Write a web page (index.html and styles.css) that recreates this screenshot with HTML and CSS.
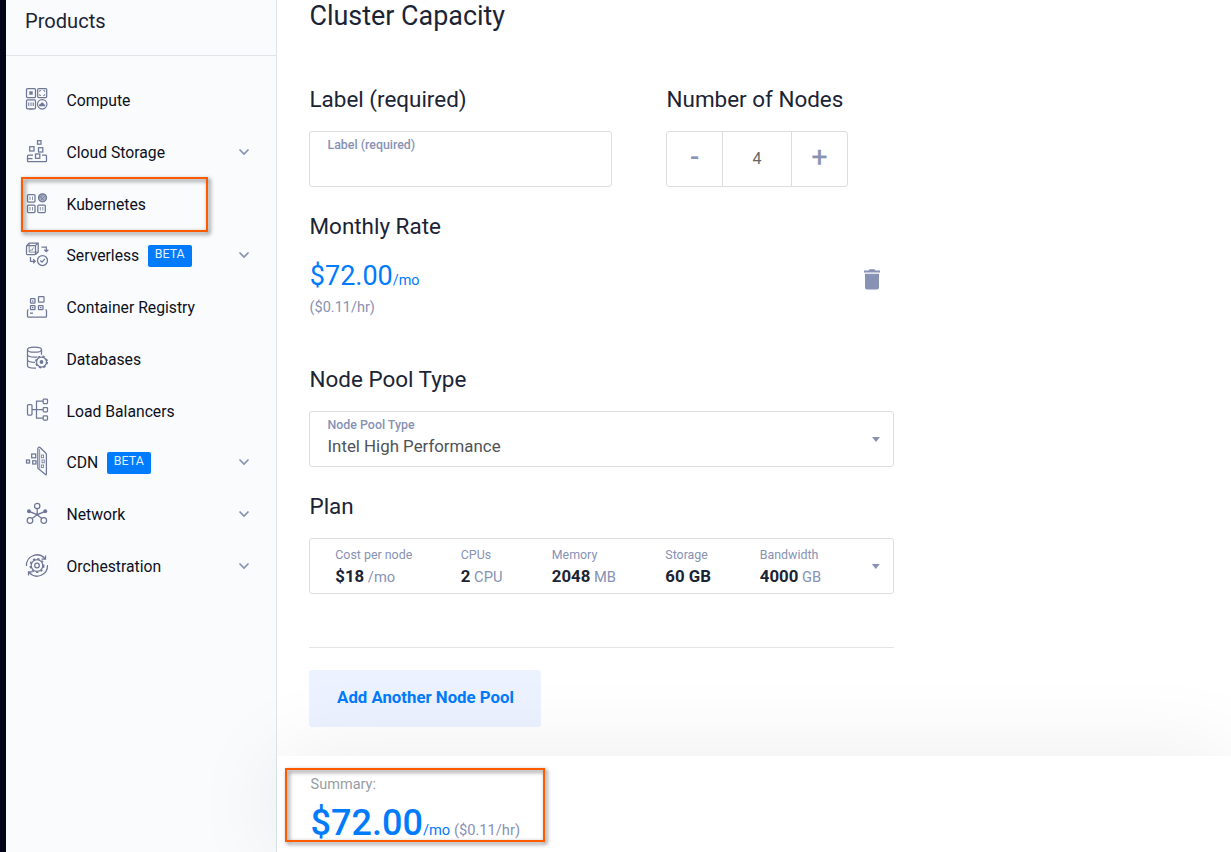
FILE: index.html
```html
<!DOCTYPE html>
<html lang="en">
<head>
<meta charset="utf-8">
<title>Cluster Capacity</title>
<link rel="stylesheet" href="styles.css">
</head>
<body>
<div class="app">
  <div class="rail"></div>
  <aside class="sidebar">
    <div class="sidebar-head">Products</div>
    <nav class="nav">
      <a class="nav-item">
        <svg class="icon" viewBox="0 0 24 30"><rect x="1.500" y="2.500" width="9" height="9" rx="1"/><rect class="solid" x="4.300" y="5.300" width="3.400" height="3.400"/><rect x="12.700" y="2.500" width="9" height="9" rx="1"/><path class="thin" d="M14.700 6V4.500h1.500M18.200 4.500h1.500V6M19.700 8v1.500h-1.500M16.200 9.500h-1.500V8"/><rect x="1.500" y="13.800" width="9" height="9" rx="1"/><path class="thin" d="M3.500 16.500V20M5.200 16.500V20M6.900 16.500V20M8.500 16.500V20M4 23.200h4"/><circle cx="17.200" cy="18.300" r="4.700"/><path class="solid" d="M13.900 20.200q-.2-2 1.500-2.100.5-1.800 2-1.500 1.500.2 1.500 1.700 1.700.1 1.500 1.900z"/></svg>
        <span>Compute</span>
      </a>
      <a class="nav-item">
        <svg class="icon" viewBox="0 0 24 30"><rect x="12.500" y="2.700" width="3.500" height="3.500"/><rect x="4.700" y="8.700" width="4.300" height="4.300"/><rect x="13.500" y="9.700" width="4.300" height="4.300"/><rect x="10.500" y="16" width="4.300" height="4.300"/><path d="M8 17.200H3.500q-1 0-1 1v4.500q0 1 1 1h17q1 0 1-1v-4.500q0-1-1-1H17M2.500 20.700h5"/></svg>
        <span>Cloud Storage</span>
        <svg class="chev" viewBox="0 0 12 8"><path d="M1.500 1.500 6 6l4.500-4.500"/></svg>
      </a>
      <a class="nav-item">
        <svg class="icon" viewBox="0 0 24 30"><rect x="2.500" y="4.500" width="7.500" height="7.500" rx="1"/><path class="thin" d="M5 6.500V10M7.500 6.500V10"/><circle class="shade" cx="17.500" cy="7.800" r="4"/><path class="thin" d="M14 8.500l4-4M15.500 10.500l5-5M14.500 6l4.500 4.500"/><rect x="2.500" y="15" width="7.500" height="7.500" rx="1"/><path class="thin" d="M5 17v3.500M7.500 17v3.500"/><rect x="12.800" y="15" width="7.500" height="7.500" rx="1"/><path class="thin" d="M15.300 17v3.500M17.800 17v3.500"/></svg>
        <span>Kubernetes</span>
      </a>
      <a class="nav-item">
        <svg class="icon" viewBox="0 0 24 30"><rect x="1.500" y="4.500" width="9" height="9" rx=".8"/><path d="M1.700 4.700 4.200 2.100h9V11l-2.700 2.500M10.500 4.500l2.600-2.400"/><path class="thin" d="M4.200 2.100v9h9M4 11l2-2.500 1 1 1.500-3"/><path d="M16.500 6h4.800v4.500M19.300 8.700l2 2 2-2M5.500 16v4.300H10M8.200 18.300l2 2-2 2"/><circle cx="17.500" cy="19.500" r="5"/><path d="M15.300 19.500l1.700 1.600 2.800-3.200"/></svg>
        <span>Serverless</span><b class="badge">BETA</b>
        <svg class="chev" viewBox="0 0 12 8"><path d="M1.500 1.500 6 6l4.500-4.500"/></svg>
      </a>
      <a class="nav-item">
        <svg class="icon" viewBox="0 0 24 30"><rect x="13.500" y="3.500" width="5.500" height="5.500" rx=".6"/><rect x="5.500" y="5.700" width="4.500" height="4.500" rx=".6"/><rect x="5.500" y="12.700" width="4.500" height="4" rx=".6"/><rect x="13.500" y="12.700" width="4.500" height="4" rx=".6"/><path d="M7 8h1.500M7 14.700h1.500M15 14.700h1.500M3.500 16.700q-1 0-1 1v5.500q0 1 1 1h17q1 0 1-1v-5.500q0-1-1-1M5 20.200h3"/></svg>
        <span>Container Registry</span>
      </a>
      <a class="nav-item">
        <svg class="icon" viewBox="0 0 24 30"><ellipse cx="9.500" cy="4.700" rx="7" ry="2.500"/><path d="M2.500 4.700v16q0 2.300 7 2.500h1.500M16.500 4.700v5M2.500 10q1 2 7 2.200h3M2.500 15.200q1 2 7.500 2.200"/><circle cx="16.500" cy="17" r="5"/><circle class="gear-teeth" cx="16.500" cy="17" r="5.800"/><circle class="solid" cx="16.500" cy="17" r="1.900"/></svg>
        <span>Databases</span>
      </a>
      <a class="nav-item">
        <svg class="icon" viewBox="0 0 24 30"><rect x="2.500" y="7.500" width="4.500" height="10.500" rx="1"/><path d="M7 12.700h11M18 4.200h-6.500v17H18"/><rect x="18.200" y="2.200" width="4.300" height="4.300" rx=".8"/><rect x="18.200" y="10.500" width="4.300" height="4.300" rx=".8"/><rect x="18.200" y="18.800" width="4.300" height="4.300" rx=".8"/></svg>
        <span>Load Balancers</span>
      </a>
      <a class="nav-item">
        <svg class="icon" viewBox="0 0 24 30"><rect x="1.500" y="12" width="3" height="3"/><rect x="6.700" y="6" width="4" height="3.800"/><rect x="7.700" y="12.800" width="3.300" height="3.200"/><path d="M13.300-.3q.9-1 2 0l5.400 5.300q.7.600.7 1.500v19.500q0 1.400-1 .6L13.500 20.800q-.7-.5-.7-1.500V1q0-.8.500-1.300z"/><g class="thin"><path d="M14.600 1v19.500"/><rect x="16.300" y="7" width="2.300" height="2.800"/><rect x="17" y="12" width="2.300" height="2.800"/><rect x="16.300" y="17" width="2.300" height="2.500"/></g></svg>
        <span>CDN</span><b class="badge">BETA</b>
        <svg class="chev" viewBox="0 0 12 8"><path d="M1.500 1.500 6 6l4.500-4.500"/></svg>
      </a>
      <a class="nav-item">
        <svg class="icon" viewBox="0 0 24 30"><circle cx="12.200" cy="6" r="2.700"/><circle class="solid" cx="4" cy="11.300" r="2"/><circle class="solid" cx="20.200" cy="11.300" r="2"/><circle cx="5" cy="20.500" r="2.800"/><circle cx="18.800" cy="20.500" r="2.800"/><path d="M12.200 9v5M4 11.300l8.200 3.400 8-3.400M12.200 14.700 7 18.500M12.200 14.700l4.600 3.800"/></svg>
        <span>Network</span>
        <svg class="chev" viewBox="0 0 12 8"><path d="M1.500 1.500 6 6l4.500-4.500"/></svg>
      </a>
      <a class="nav-item">
        <svg class="icon" viewBox="0 0 24 30"><circle cx="12" cy="13.500" r="5.800"/><circle class="gear-teeth" cx="12" cy="13.500" r="6.800"/><circle cx="12" cy="13.500" r="2.300"/><path d="M1.500 14A10.500 10.500 0 0 1 19.700 6.300M22.500 13A10.500 10.500 0 0 1 4.300 20.700M20.500 3.500v3.700h-4M3.500 23.500v-3.700h4"/></svg>
        <span>Orchestration</span>
        <svg class="chev" viewBox="0 0 12 8"><path d="M1.500 1.500 6 6l4.500-4.500"/></svg>
      </a>
    </nav>
  </aside>
  <main class="main">
    <div class="content">
      <h1>Cluster Capacity</h1>
      <div class="row">
        <section class="label-col">
          <h2>Label (required)</h2>
          <div class="field"><span class="field-label">Label (required)</span></div>
        </section>
        <section>
          <h2>Number of Nodes</h2>
          <div class="stepper"><span class="sign">-</span><span class="count">4</span><span class="sign plus">+</span></div>
        </section>
      </div>
      <section class="block rate">
        <div>
          <h2>Monthly Rate</h2>
          <div class="price">$72.00<small>/mo</small></div>
          <div class="hourly">($0.11/hr)</div>
        </div>
        <svg class="trash" viewBox="0 0 16 21"><path d="M0 1.500h4.500L5.500.3h5l1 1.200H16v2H0zM1 4.800h14v13.700q0 2-2 2H3q-2 0-2-2z"/></svg>
      </section>
      <section class="block pool">
        <h2>Node Pool Type</h2>
        <div class="field select">
          <div><span class="field-label">Node Pool Type</span><span class="field-value">Intel High Performance</span></div>
          <i class="caret"></i>
        </div>
      </section>
      <section class="block">
        <h2>Plan</h2>
        <div class="field select plan">
          <dl><dt>Cost per node</dt><dd><b>$18</b> /mo</dd></dl>
          <dl><dt>CPUs</dt><dd><b>2</b> CPU</dd></dl>
          <dl><dt>Memory</dt><dd><b>2048</b> MB</dd></dl>
          <dl><dt>Storage</dt><dd><b>60 GB</b></dd></dl>
          <dl><dt>Bandwidth</dt><dd><b>4000</b> GB</dd></dl>
          <i class="caret"></i>
        </div>
      </section>
      <hr>
      <button class="add">Add Another Node Pool</button>
    </div>
    <footer class="summary">
      <div class="summary-label">Summary:</div>
      <div class="total"><strong>$72.00</strong><span class="per">/mo</span> <span>($0.11/hr)</span></div>
    </footer>
  </main>
  <div class="mark mark-nav"></div>
  <div class="mark mark-total"></div>
</div>
</body>
</html>
```
FILE: styles.css
```css
* { box-sizing: border-box; }
body {
  margin: 0;
  font-family: Roboto, "Liberation Sans", sans-serif;
  font-size: 16px;
  color: #1b2435;
  background: #fff;
}
.app {
  position: relative;
  display: flex;
  width: 1231px;
  height: 852px;
  overflow: hidden;
}
.rail { width: 6px; background: #02041a; }
.sidebar {
  width: 271px;
  background: #f9fbfd;
  border-right: 1px solid #e1e4e8;
}
.sidebar-head {
  height: 56px;
  padding: 7px 0 0 19px;
  font-size: 20.1px;
  line-height: 28px;
  border-bottom: 1px solid #e1e4e8;
}
.nav { padding-top: 18.8px; font-size: 15.72px; }
.nav-item {
  display: flex;
  align-items: center;
  height: 51.75px;
  padding: 0 26px 0 19px;
  color: #0c101c;
  line-height: 19px;
}
.icon {
  width: 24px;
  height: 30px;
  margin: 1px 17.5px 0 0;
  overflow: visible;
  fill: none;
  stroke: #6f7797;
  stroke-width: 1.25;
}
.icon .solid { fill: #6f7797; stroke: none; }
.icon .shade { fill: #a9afc3; }
.icon .thin { stroke-width: .8; }
.icon .gear-teeth { stroke-width: 1.4; stroke-dasharray: 2.3 2.3; }
.badge {
  height: 22px;
  width: 43.5px;
  margin-left: 8.8px;
  border-radius: 2px;
  background: #007bfc;
  color: #e3efff;
  font-size: 12.4px;
  font-weight: 400;
  line-height: 18px;
  text-align: center;
}
.chev {
  width: 12px;
  height: 8px;
  margin: 0 0 1px auto;
  fill: none;
  stroke: #8792b4;
  stroke-width: 1.7;
}
.main { flex: 1; display: flex; flex-direction: column; }
.content { flex: 1; width: 617px; padding-left: 32px; }
h1, h2 { margin: 0; padding-left: .5px; font-weight: 400; }
h1 { margin-bottom: 53px; font-size: 26.9px; line-height: 32px; }
h2 { font-size: 22.45px; line-height: 28px; margin-bottom: 18px; }
.row { display: flex; gap: 54px; }
.label-col { width: 303px; }
.field {
  height: 56px;
  padding: 5px 17px 5px 17.5px;
  border: 1px solid #dcdddf;
  border-radius: 3px;
  background: #fff;
}
.field-label {
  display: block;
  color: #8792b4;
  font-size: 12.4px;
  font-weight: 500;
  line-height: 16px;
}
.field-value { display: block; font-size: 16.85px; line-height: 26px; color: #4f5357; }
.stepper {
  display: grid;
  grid-template-columns: 55px 70px 55px;
  width: 182px;
  height: 56px;
  border: 1px solid #dcdddf;
  border-radius: 3px;
  text-align: center;
  line-height: 54px;
}
.sign { color: #8792b4; font-size: 27px; font-weight: 500; line-height: 50px; }
.plus { font-size: 28px; font-weight: 400; -webkit-text-stroke: .3px #8792b4; }
.count { border: solid #dcdddf; border-width: 0 1px; color: #666; }
.block { margin-top: 25px; }
.rate { display: flex; justify-content: space-between; }
.rate h2 { margin-bottom: 20px; }
.price { height: 32px; padding-left: .8px; color: #007bfc; font-size: 27px; line-height: 32px; }
.price small { font-size: 14.4px; }
.hourly { margin-top: 6px; padding-left: .6px; color: #8792b4; font-size: 14.5px; line-height: 20px; }
.trash { width: 16px; height: 21px; margin: 57px 14px 0 0; fill: #8792b4; }
.pool { margin-top: 47px; }
.select { display: flex; justify-content: space-between; }
.caret {
  margin: 20px -4px 0 0;
  width: 8px;
  height: 5px;
  background: #8792b4;
  clip-path: polygon(0 0, 100% 0, 50% 100%);
}
.plan {
  display: grid;
  grid-template-columns: 125.5px 91px 113.5px 94.5px 112px 8px;
  justify-content: start;
  padding: 7px 0 0 25.3px;
}
.plan .caret { margin-top: 18px; }
dl, dd { margin: 0; }
dt { color: #8792b4; font-size: 12.4px; line-height: 17px; }
dd { color: #8792b4; font-size: 14.7px; line-height: 26px; white-space: nowrap; }
dd b { color: #1b2435; font-size: 16.8px; }
hr { margin: 53px 0 22px; border: 0; height: 1px; background: #e3e5e8; }
.add {
  display: block;
  width: 232px;
  height: 57px;
  padding: 0 0 3px 1px;
  border: 0;
  border-radius: 3px;
  background: #ecf2ff;
  color: #007bfc;
  font: 700 16.8px Roboto, "Liberation Sans", sans-serif;
}
.summary {
  position: relative;
  height: 96px;
  padding: 19px 0 0 33.6px;
  background: #fff;
  box-shadow: 0 0 90px rgba(0, 0, 0, .08);
}
.summary-label { color: #999da3; font-size: 14.5px; line-height: 20px; }
.total { margin-top: 8px; line-height: 41px; font-size: 14.7px; white-space: nowrap; color: #8792b4; }
.total strong { font-size: 36px; font-weight: 500; color: #007bfc; }
.per { color: #007bfc; }
.mark {
  position: absolute;
  border: 2px solid #ff5a00;
  filter: drop-shadow(2px 2px 2px rgba(0, 0, 0, .6));
}
.mark-nav { left: 20.6px; top: 177px; width: 187px; height: 55px; }
.mark-total { left: 285px; top: 768px; width: 260px; height: 74px; }
```
